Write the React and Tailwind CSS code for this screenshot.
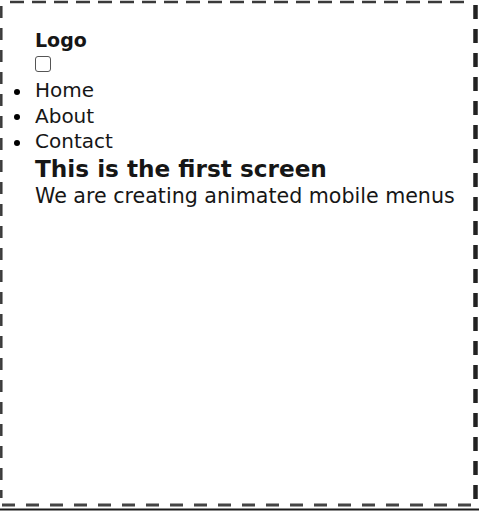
import React from 'react'

function Frame(){
  // dashed frame drawn as lines, the dash rhythm is longer than the browser's own
  return (
    <svg className="absolute inset-0 pointer-events-none" width="479" height="511">
      <line x1="10" y1="2" x2="470" y2="2" stroke="#3a3a3a" strokeWidth="2.5" strokeDasharray="14 8" />
      <line x1="1.3" y1="6" x2="1.3" y2="498" stroke="#3a3a3a" strokeWidth="2.5" strokeDasharray="12 10" />
      <line x1="475.5" y1="5" x2="475.5" y2="505" stroke="#222" strokeWidth="4.5" strokeDasharray="14 10" />
      <line x1="2" y1="505" x2="472" y2="505" stroke="#444" strokeWidth="3" strokeDasharray="13 11" />
      <line x1="0" y1="509.5" x2="479" y2="509.5" stroke="#1a1a1a" strokeWidth="2" />
    </svg>
  )
}

export default function App(){
  const links = ['Home','About','Contact']
  return (
    <div className="relative w-[479px] h-[511px] bg-white text-[#161616]" style={{fontFamily:'"DejaVu Sans", Verdana, sans-serif'}}>
      <div className="pl-[35px] pt-[27px]">
        <nav>
          <div className="text-[19px] font-bold leading-[26px]">Logo</div>
          <input type="checkbox" className="w-4 h-4 mt-[3px] block appearance-none border border-[#555] rounded-[3px] bg-white" />
          <ul className="mt-[6px] text-[20px] leading-[25.5px]">
            {links.map(l => (
              <li key={l} className="flex items-center">
                <span className="w-[6px] h-[6px] rounded-full bg-black -ml-[21px] mr-[15px] mt-[2px] shrink-0" />
                {l}
              </li>
            ))}
          </ul>
        </nav>
        <h1 className="text-[23.2px] font-bold leading-[28px]">This is the first screen</h1>
        <p className="text-[20.6px] leading-[26px]">We are creating animated mobile menus</p>
      </div>
      <Frame />
    </div>
  )
}
